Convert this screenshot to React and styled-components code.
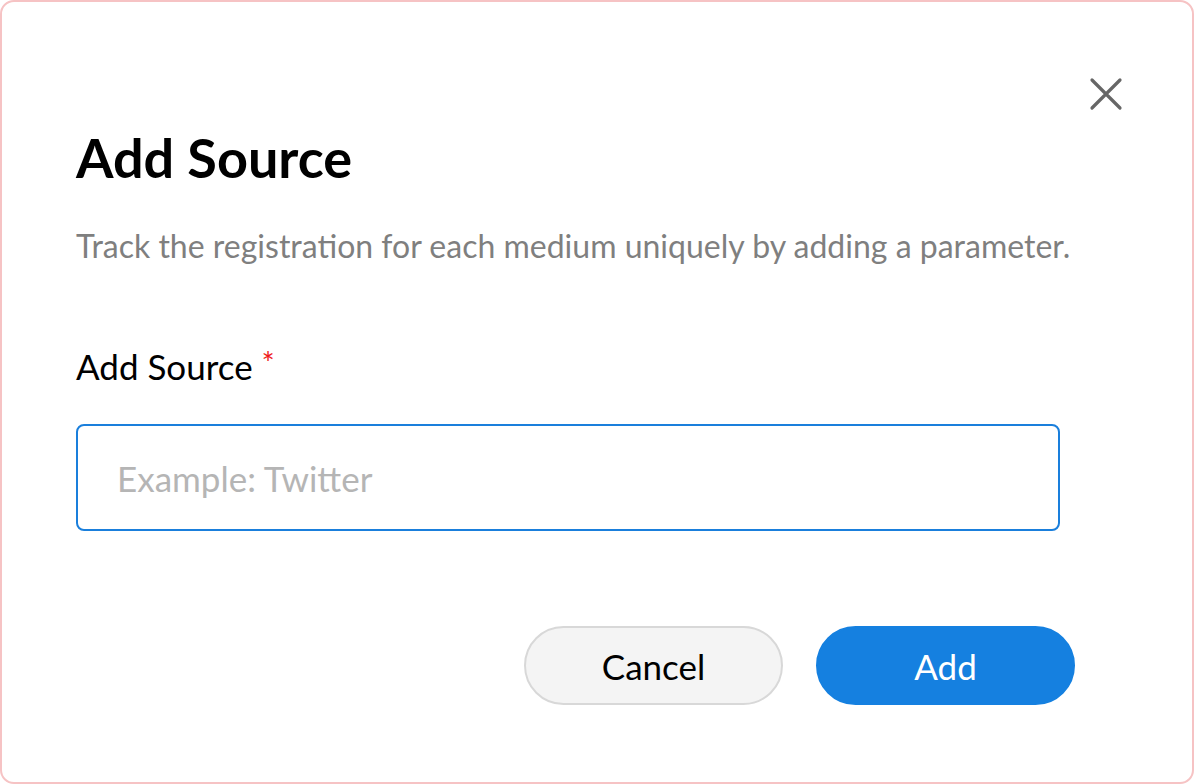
import React from "react";
import styled, { createGlobalStyle } from "styled-components";

const GlobalStyle = createGlobalStyle`
  html, body {
    margin: 0;
    padding: 0;
    background: #ffffff;
  }
  body {
    font-family: Lato, "Noto Sans", sans-serif;
  }
`;

const Frame = styled.div`
  box-sizing: border-box;
  width: 1194px;
  height: 784px;
  border: 2px solid #f6c3c4;
  border-radius: 14px;
  background: #fff;
  padding: 0 0 0 74px;
  display: flex;
  flex-direction: column;
`;

const TopBar = styled.div`
  display: flex;
  justify-content: flex-end;
  padding: 74px 68px 0 0;
  height: 36px;
`;

const CloseButton = styled.button`
  border: none;
  background: none;
  padding: 0;
  width: 36px;
  height: 36px;
  cursor: pointer;
  display: flex;
  align-items: center;
  justify-content: center;
`;

const Title = styled.h1`
  margin: 14px 0 0 0;
  font-size: 54px;
  font-weight: 700;
  color: #000;
  line-height: 64px;
`;

const Description = styled.p`
  margin: 36px 0 0 0;
  font-size: 32px;
  color: #7f7f7f;
  line-height: 40px;
`;

const Label = styled.label`
  margin-top: 80px;
  font-size: 35px;
  color: #000;
  line-height: 40px;
  display: flex;
  align-items: flex-start;
`;

const Required = styled.span`
  color: #f01c1c;
  font-size: 31px;
  margin: 4px 0 0 9px;
  line-height: 24px;
`;

const Input = styled.input`
  box-sizing: border-box;
  margin-top: 38px;
  width: 984px;
  height: 107px;
  border: 2px solid #1a7fdc;
  border-radius: 8px;
  padding: 0 0 0 39px;
  font-family: Lato, "Noto Sans", sans-serif;
  font-size: 35px;
  color: #000;
  outline: none;
  &::placeholder {
    color: #b5b5b5;
  }
`;

const Actions = styled.div`
  display: flex;
  justify-content: flex-end;
  gap: 33px;
  margin-top: 95px;
  padding-right: 117px;
`;

const Button = styled.button`
  box-sizing: border-box;
  width: 259px;
  height: 79px;
  border-radius: 40px;
  font-family: Lato, "Noto Sans", sans-serif;
  font-size: 35px;
  cursor: pointer;
  border: 2px solid ${p => (p.$primary ? "#1580e0" : "#d8d8d8")};
  background: ${p => (p.$primary ? "#1580e0" : "#f4f4f4")};
  color: ${p => (p.$primary ? "#fff" : "#000")};
`;

export default function App() {
  return (
    <>
      <GlobalStyle />
      <Frame>
        <TopBar>
          <CloseButton aria-label="Close">
            <svg width="34" height="34" viewBox="0 0 34 34">
              <path
                d="M3 3 L31 31 M31 3 L3 31"
                stroke="#666"
                strokeWidth="3.2"
                strokeLinecap="round"
              />
            </svg>
          </CloseButton>
        </TopBar>
        <Title>Add Source</Title>
        <Description>
          Track the registration for each medium uniquely by adding a parameter.
        </Description>
        <Label>
          Add Source<Required>*</Required>
        </Label>
        <Input placeholder="Example: Twitter" />
        <Actions>
          <Button>Cancel</Button>
          <Button $primary>Add</Button>
        </Actions>
      </Frame>
    </>
  );
}
